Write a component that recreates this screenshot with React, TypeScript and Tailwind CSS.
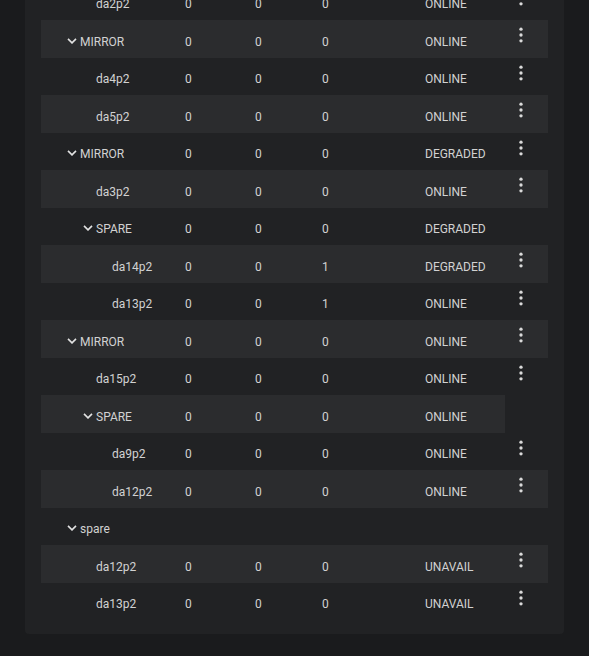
import React from "react";

type Row = {
  name: string;
  level: 1 | 2 | 3;
  group?: boolean;
  vals?: [string, string, string];
  status?: string;
  action?: boolean;
};

const rows: Row[] = [
  { name: "da2p2", level: 2, vals: ["0", "0", "0"], status: "ONLINE", action: true },
  { name: "MIRROR", level: 1, group: true, vals: ["0", "0", "0"], status: "ONLINE", action: true },
  { name: "da4p2", level: 2, vals: ["0", "0", "0"], status: "ONLINE", action: true },
  { name: "da5p2", level: 2, vals: ["0", "0", "0"], status: "ONLINE", action: true },
  { name: "MIRROR", level: 1, group: true, vals: ["0", "0", "0"], status: "DEGRADED", action: true },
  { name: "da3p2", level: 2, vals: ["0", "0", "0"], status: "ONLINE", action: true },
  { name: "SPARE", level: 2, group: true, vals: ["0", "0", "0"], status: "DEGRADED" },
  { name: "da14p2", level: 3, vals: ["0", "0", "1"], status: "DEGRADED", action: true },
  { name: "da13p2", level: 3, vals: ["0", "0", "1"], status: "ONLINE", action: true },
  { name: "MIRROR", level: 1, group: true, vals: ["0", "0", "0"], status: "ONLINE", action: true },
  { name: "da15p2", level: 2, vals: ["0", "0", "0"], status: "ONLINE", action: true },
  { name: "SPARE", level: 2, group: true, vals: ["0", "0", "0"], status: "ONLINE" },
  { name: "da9p2", level: 3, vals: ["0", "0", "0"], status: "ONLINE", action: true },
  { name: "da12p2", level: 3, vals: ["0", "0", "0"], status: "ONLINE", action: true },
  { name: "spare", level: 1, group: true },
  { name: "da12p2", level: 2, vals: ["0", "0", "0"], status: "UNAVAIL", action: true },
  { name: "da13p2", level: 2, vals: ["0", "0", "0"], status: "UNAVAIL", action: true },
];

const indent: Record<number, string> = {
  1: "pl-[26px]",
  2: "pl-[42px]",
  3: "pl-[58px]",
};

function Chevron() {
  return (
    <svg width="10" height="6" viewBox="0 0 10 6" className="block -translate-y-[1px]">
      <path d="M1 0.9 L5 4.9 L9 0.9" fill="none" stroke="#e2e2e2" strokeWidth="1.6" />
    </svg>
  );
}

function Kebab() {
  return (
    <svg width="20" height="20" viewBox="0 0 24 24" className="block">
      <circle cx="12" cy="5" r="2" fill="#dadada" />
      <circle cx="12" cy="12" r="2" fill="#dadada" />
      <circle cx="12" cy="19" r="2" fill="#dadada" />
    </svg>
  );
}

export default function App() {
  return (
    <div
      className="min-h-screen bg-[#1a1b1d] px-[25px] pb-[22px] text-[12px] text-[#d2d2d2]"
      style={{ fontFamily: "Roboto, 'Noto Sans', sans-serif" }}
    >
      <div className="-mt-[17.5px] rounded-[4px] bg-[#212224] px-[16px] pb-[14px]">
        {rows.map((r, i) => (
          <div
            key={i}
            className={`flex h-[37.5px] w-fit items-start ${i % 2 === 1 ? "bg-[#2b2c2e]" : ""}`}
          >
            <div className={`flex w-[144px] items-center pt-[13.5px] leading-[16px] ${indent[r.level]}`}>
              <div className="flex w-[13px] shrink-0 items-center">{r.group ? <Chevron /> : null}</div>
              <span>{r.name}</span>
            </div>
            {r.vals ? (
              <>
                <div className="w-[70px] pt-[13.5px] leading-[16px]">{r.vals[0]}</div>
                <div className="w-[67px] pt-[13.5px] leading-[16px]">{r.vals[1]}</div>
                <div className="w-[103px] pt-[13.5px] leading-[16px]">{r.vals[2]}</div>
                <div className="w-[80px] pt-[13.5px] leading-[16px]">{r.status}</div>
              </>
            ) : null}
            {r.action ? (
              <div className="w-[43px] pl-[6px] pt-[5px]">
                <Kebab />
              </div>
            ) : null}
          </div>
        ))}
      </div>
    </div>
  );
}
